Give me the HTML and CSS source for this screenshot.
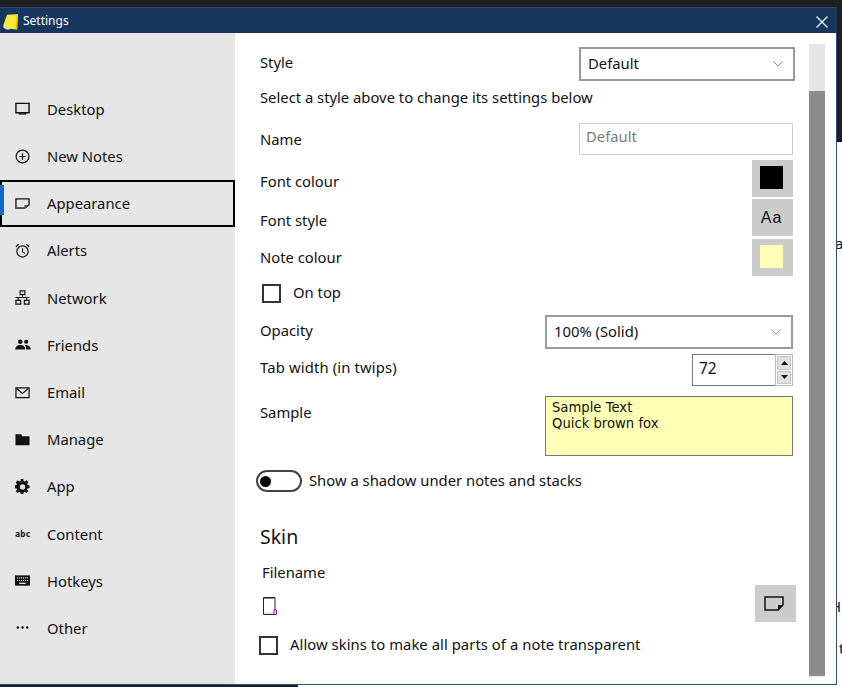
FILE: index.html
```html
<!DOCTYPE html>
<html lang="en">
<head>
<meta charset="utf-8">
<title>Settings</title>
<link rel="stylesheet" href="styles.css">
</head>
<body>
<div class="desktop">
  <div class="back-top"></div>
  <div class="back-right"></div>
  <div class="back-bottom"></div>
  <span class="frag frag-a">a</span>
  <span class="frag frag-h">H</span>
  <span class="frag frag-t">t</span>

  <div class="window">
    <header class="titlebar">
      <svg class="app-icon" width="15" height="16" viewBox="0 0 15 16"><path d="M4 .8 15 .3 14 15.500 8.500 15 .2 11.500z" fill="#ffe83c"/><path d="M15 .3 14 15.500 12.300 15.400 13.500 .4z" fill="#f0c820"/><path d="M.2 11.500 8.500 15 4.500 15.500 1 14z" fill="#fff8c4"/></svg>
      <span class="title">Settings</span>
      <svg class="close" width="12" height="12" viewBox="0 0 12 12"><path d="M.5.500l11 11M11.500.500l-11 11" stroke="#fff" stroke-width="1.200" fill="none"/></svg>
    </header>
    <div class="body">
      <nav class="sidebar">
        <div class="nav-item"><svg class="nav-icon" viewBox="0 0 16 16"><path d="M1 2.500h14v10H1z" fill="none" stroke="#111" stroke-width="1.500"/><path d="M4 13h8v1.500H4z" fill="#111"/></svg>Desktop</div>
        <div class="nav-item"><svg class="nav-icon" viewBox="0 0 16 16"><circle cx="8" cy="8" r="6.800" fill="none" stroke="#111" stroke-width="1.300"/><path d="M8 4.500v7M4.500 8h7" stroke="#111" stroke-width="1.300"/></svg>New Notes</div>
        <div class="nav-item nav-selected"><span class="nav-bar"></span><svg class="nav-icon" viewBox="0 0 16 16"><path d="M1 3h14v6.500L10.500 13H1z" fill="none" stroke="#111" stroke-width="1.400"/><path d="M10 13V9.500h5L10.500 13.500z" fill="#555"/><path d="M1 12h9v1.500H1z" fill="#555"/></svg>Appearance</div>
        <div class="nav-item"><svg class="nav-icon" viewBox="0 0 16 16"><circle cx="8" cy="9" r="6" fill="none" stroke="#111" stroke-width="1.300"/><path d="M8 5.500V9.500l2.500 1.500" fill="none" stroke="#111" stroke-width="1.100"/><path d="M1 4 4 1.200M15 4l-3-2.800" stroke="#111" stroke-width="1.400"/></svg>Alerts</div>
        <div class="nav-item"><svg class="nav-icon" viewBox="0 0 16 16"><path d="M5.500 1h5v4h-5zM1 11h5v4H1zM10 11h5v4h-5z" fill="none" stroke="#111" stroke-width="1.300"/><path d="M8 5v3M3.500 11V8h9v3M0.500 8H15.500" stroke="#111" stroke-width="1.100" fill="none"/></svg>Network</div>
        <div class="nav-item"><svg class="nav-icon nav-icon-wide" viewBox="0 0 17 12"><circle cx="5.500" cy="3" r="2.500" fill="#111"/><circle cx="12" cy="3" r="2.300" fill="#111"/><path d="M0 11.500C0 8 3 6.500 5.500 6.500S11 8 11 11.500zM12 11.500C12 9 11.500 7.500 10 6.700 12 6 17 7 17 11.500z" fill="#111"/></svg>Friends</div>
        <div class="nav-item"><svg class="nav-icon" viewBox="0 0 16 16"><path d="M1 3h14v10.500H1z" fill="none" stroke="#111" stroke-width="1.300"/><path d="M1.500 3.500 8 9l6.500-5.500" fill="none" stroke="#111" stroke-width="1.200"/></svg>Email</div>
        <div class="nav-item"><svg class="nav-icon" viewBox="0 0 16 16"><path d="M.5 2.500h6L8 4.500h7.500V14H.5z" fill="#111"/></svg>Manage</div>
        <div class="nav-item"><svg class="nav-icon" viewBox="0 0 16 16"><path fill="#111" fill-rule="evenodd" d="M6.500 0h3l.4 2.200 1.300.6L13.100 1.500l2.100 2.200-1.300 1.900.5 1.300L16.500 7.300v3l-2.200.4-.5 1.200 1.300 1.900-2.100 2.100-1.900-1.300-1.300.5-.3 2.100h-3l-.4-2.100-1.300-.5-1.800 1.300-2.100-2.100 1.300-1.900-.5-1.200-2.200-.4v-3l2.200-.4.5-1.300L.9 3.700 3 1.500l1.800 1.300 1.300-.6zM8.500 6a2.700 2.700 0 1 0 0 5.900 2.700 2.700 0 0 0 0-5.900z" transform="scale(.94)"/></svg>App</div>
        <div class="nav-item"><span class="nav-icon abc">abc</span>Content</div>
        <div class="nav-item"><svg class="nav-icon" viewBox="0 0 16 16"><path fill="#111" d="M0 2.500h16v11H0z"/><path stroke="#e6e6e6" stroke-width="1.200" stroke-dasharray="1.200 1" d="M2 5.200h12M2 8h12"/><path stroke="#e6e6e6" stroke-width="1.400" d="M4.500 11h7"/></svg>Hotkeys</div>
        <div class="nav-item"><svg class="nav-icon" viewBox="0 0 16 16"><circle cx="3" cy="8" r="1.300" fill="#111"/><circle cx="8" cy="8" r="1.300" fill="#111"/><circle cx="13" cy="8" r="1.300" fill="#111"/></svg>Other</div>
      </nav>
      <main class="main">
        <div class="row row-style">
          <span class="lift-4">Style</span>
          <div class="select select-style"><span class="lift-3">Default</span><svg class="chev" width="10" height="6" viewBox="0 0 10 6"><path d="M.5.500 5 5 9.500.5" fill="none" stroke="#8494ab"/></svg></div>
        </div>
        <div class="row row-hint"><span class="lift-2">Select a style above to change its settings below</span></div>
        <div class="row row-name">
          <span>Name</span>
          <div class="input">Default</div>
        </div>
        <div class="row row-btn row-font">
          <span class="nudge-down">Font colour</span>
          <div class="swatch-btn"><span class="swatch swatch-black"></span></div>
        </div>
        <div class="row row-btn row-gap2">
          <span class="nudge-down">Font style</span>
          <div class="swatch-btn"><span class="aa">Aa</span></div>
        </div>
        <div class="row row-btn row-gap3">
          <span class="lift-2">Note colour</span>
          <div class="swatch-btn"><span class="swatch swatch-yellow"></span></div>
        </div>
        <div class="row-check row-ontop">
          <span class="checkbox"></span><span class="lift-4">On top</span>
        </div>
        <div class="row row-opacity">
          <span class="lift-4">Opacity</span>
          <div class="select select-opacity"><span class="lift-3">100% (Solid)</span><svg class="chev" width="10" height="6" viewBox="0 0 10 6"><path d="M.5.500 5 5 9.500.5" fill="none" stroke="#8494ab"/></svg></div>
        </div>
        <div class="row row-tab">
          <span class="lift-6 track-tab">Tab width (in twips)</span>
          <div class="spin">
            <div class="spin-value">72</div>
            <div class="spin-buttons">
              <div class="spin-btn"><svg width="7" height="4" viewBox="0 0 7 4"><path d="M3.500 0 7 4H0z" fill="#111"/></svg></div>
              <div class="spin-btn"><svg width="7" height="4" viewBox="0 0 7 4"><path d="M3.500 4 7 0H0z" fill="#111"/></svg></div>
            </div>
          </div>
        </div>
        <div class="row row-sample">
          <span class="sample-label">Sample</span>
          <div class="sample">Sample Text<br>Quick brown fox</div>
        </div>
        <div class="row-toggle">
          <span class="toggle"><span class="knob"></span></span><span class="lift-3">Show a shadow under notes and stacks</span>
        </div>
        <h2 class="skin">Skin</h2>
        <div class="filename">Filename</div>
        <div class="row row-file">
          <svg class="file-icon" width="14" height="18" viewBox="0 0 14 18"><path d="M.5.500h11.500v17H.5z" fill="#fff" stroke="#222"/><path d="M1 1h10.500v1H1z" fill="#888"/><path d="M1 15h10.500v2H1z" fill="#e8e8e8"/><path d="M11 13h2.500v4.500H11z" fill="#fff" stroke="#8a1a8a"/></svg>
          <div class="swatch-btn swatch-skin"><svg width="20" height="15" viewBox="0 0 20 15"><path d="M1 1h18v8l-5 5H1z" fill="none" stroke="#111" stroke-width="1.500"/><path d="M14 14V9h5.500L14.500 14.500z" fill="#111"/></svg></div>
        </div>
        <div class="row-check row-allow">
          <span class="checkbox"></span><span class="lift-3 track-allow">Allow skins to make all parts of a note transparent</span>
        </div>
      </main>
      <div class="scrollbar"><div class="thumb"></div></div>
    </div>
  </div>
</div>
</body>
</html>
```
FILE: styles.css
```css
* { box-sizing: border-box; }
html, body { margin: 0; padding: 0; overflow: hidden; background: #fff; }
body { font-family: "Noto Sans", "Open Sans", sans-serif; font-size: 14.8px; color: #111; }
.desktop { position: relative; width: 842px; height: 687px; overflow: hidden; background: #fff; }

.back-top { position: absolute; left: 0; top: 0; width: 842px; height: 8px; background: #1f1f1f; }
.back-right { position: absolute; left: 836px; top: 0; width: 6px; height: 142px; background: #1f1f1f; border-bottom: 1px solid #000; }
.back-bottom { position: absolute; left: 0; top: 684px; width: 298px; height: 3px; background: #1f1f1f; }
.frag { position: absolute; font-size: 15px; line-height: 20px; color: #111; }
.frag-a { left: 835px; top: 233px; }
.frag-h { left: 830px; top: 596px; }
.frag-t { left: 839px; top: 638px; }

.window { position: absolute; left: 0; top: 7px; width: 837px; height: 678px; display: flex; flex-direction: column; background: #fff; border-right: 1px solid #2c5078; border-bottom: 1px solid #2c5078; }
.titlebar { flex: none; height: 26px; margin-right: -1px; background: #17365d; display: flex; align-items: center; color: #fff; border-top: 1px solid #2c4a6e; }
.app-icon { margin-left: 3px; margin-top: 3px; flex: none; }
.title { margin-left: 5px; font-size: 12px; flex: 1; }
.close { margin-right: 9px; margin-top: 2px; flex: none; }

.body { flex: 1; display: flex; min-height: 0; }
.sidebar { flex: none; width: 235px; background: #e6e6e6; padding-top: 52.3px; display: flex; flex-direction: column; }
.nav-item { position: relative; height: 47.2px; display: flex; align-items: center; padding-left: 15px; color: #111; }
.nav-icon { width: 15px; height: 15px; margin-right: 17px; flex: none; }
.nav-icon-wide { width: 16px; height: 11px; margin-right: 16px; }
.abc { font-family: "DejaVu Sans Mono", monospace; font-weight: 700; font-size: 8.500px; line-height: 17px; letter-spacing: .1px; color: #111; white-space: nowrap; }
.nav-selected { outline: 2px solid #000; outline-offset: -2px; }
.nav-bar { position: absolute; left: 0; top: 5px; width: 4px; height: 30px; background: #0a6cc4; }

.main { flex: none; width: 574px; padding: 14px 16px 0 25px; display: flex; flex-direction: column; }
.row { display: flex; justify-content: space-between; align-items: center; }
.nudge-down { padding-top: 4px; }
.lift-2 { padding-bottom: 2px; }
.lift-3 { padding-bottom: 3px; }
.lift-4 { padding-bottom: 4px; }
.lift-6 { padding-bottom: 6px; }
.track-tab { letter-spacing: .15px; }
.track-allow { letter-spacing: .06px; }
.row-style { height: 34px; margin-right: -2px; }
.row-hint { height: 34px; }
.row-name { height: 32px; margin-top: 8px; }
.row-btn { height: 37px; }
.row-font { margin-top: 5px; }
.row-gap2 { margin-top: 2px; }
.row-gap3 { margin-top: 3px; }
.row-check { display: flex; align-items: center; }
.row-ontop { height: 19px; margin-top: 8px; margin-left: 2px; }
.row-opacity { height: 34px; margin-top: 12px; }
.row-tab { height: 32px; margin-top: 5px; }
.row-sample { height: 60px; margin-top: 10px; align-items: flex-start; }
.sample-label { padding-top: 6px; }
.row-toggle { display: flex; align-items: center; height: 22px; margin-top: 14px; margin-left: -4px; }
.skin { height: 28px; margin: 31px 0 0; font-size: 19.5px; font-weight: 400; line-height: 28px; }
.filename { height: 20px; margin: 11px 0 0 2px; line-height: 20px; }
.row-file { height: 37px; margin: 3px -3px 0 3px; }
.row-allow { height: 19px; margin-top: 14px; margin-left: -1px; }

.select { display: flex; align-items: center; justify-content: space-between; border: 2px solid #999; background: #fff; height: 34px; padding-left: 7px; padding-right: 10px; }
.select-style { width: 216px; }
.select-opacity { width: 248px; }
.input { width: 214px; height: 32px; border: 1px solid #ccc; padding: 2px 6px; color: #7a7a7a; line-height: 20px; }

.swatch-btn { width: 41px; height: 37px; background: #ccc; display: flex; align-items: center; justify-content: center; }
.swatch { width: 23px; height: 23px; display: block; margin: 0 2px 2px 0; }
.swatch-black { background: #000; }
.swatch-yellow { background: #ffffb5; }
.aa { font-family: "Liberation Sans", sans-serif; font-size: 16px; letter-spacing: 1px; color: #111; margin-right: 2px; }
.swatch-skin svg { margin-right: 4px; }
.file-icon { margin-top: 5px; }

.checkbox { width: 19px; height: 19px; border: 2px solid #333; background: #fff; margin-right: 12px; flex: none; }

.spin { width: 101px; height: 32px; display: flex; border: 1px solid #777; border-right: none; }
.spin-value { flex: 1; padding-left: 6px; line-height: 26px; font-size: 15.500px; }
.spin-buttons { width: 18px; margin: -1px 0; border: 1px solid #bbb; padding: 1px; display: flex; flex-direction: column; gap: 1px; }
.spin-btn { flex: 1; background: #e1e1e1; border: 1px solid #c4c4c4; display: flex; align-items: center; justify-content: center; }

.sample { width: 248px; height: 60px; background: #ffffb5; border: 1px solid #777; padding: 3px 6px; font-family: "DejaVu Sans", sans-serif; font-size: 13.200px; line-height: 16px; color: #111; }

.toggle { position: relative; width: 46px; height: 22px; border: 2px solid #444; border-radius: 11px; margin-right: 7px; flex: none; background: #fff; }
.knob { position: absolute; left: 2px; top: 4px; width: 11px; height: 11px; border-radius: 50%; background: #000; }

.scrollbar { flex: none; width: 16px; margin: 11px 0 7px; background: #e6e6e6; padding-top: 47px; }
.thumb { height: 585px; background: #8c8c8c; }
```
